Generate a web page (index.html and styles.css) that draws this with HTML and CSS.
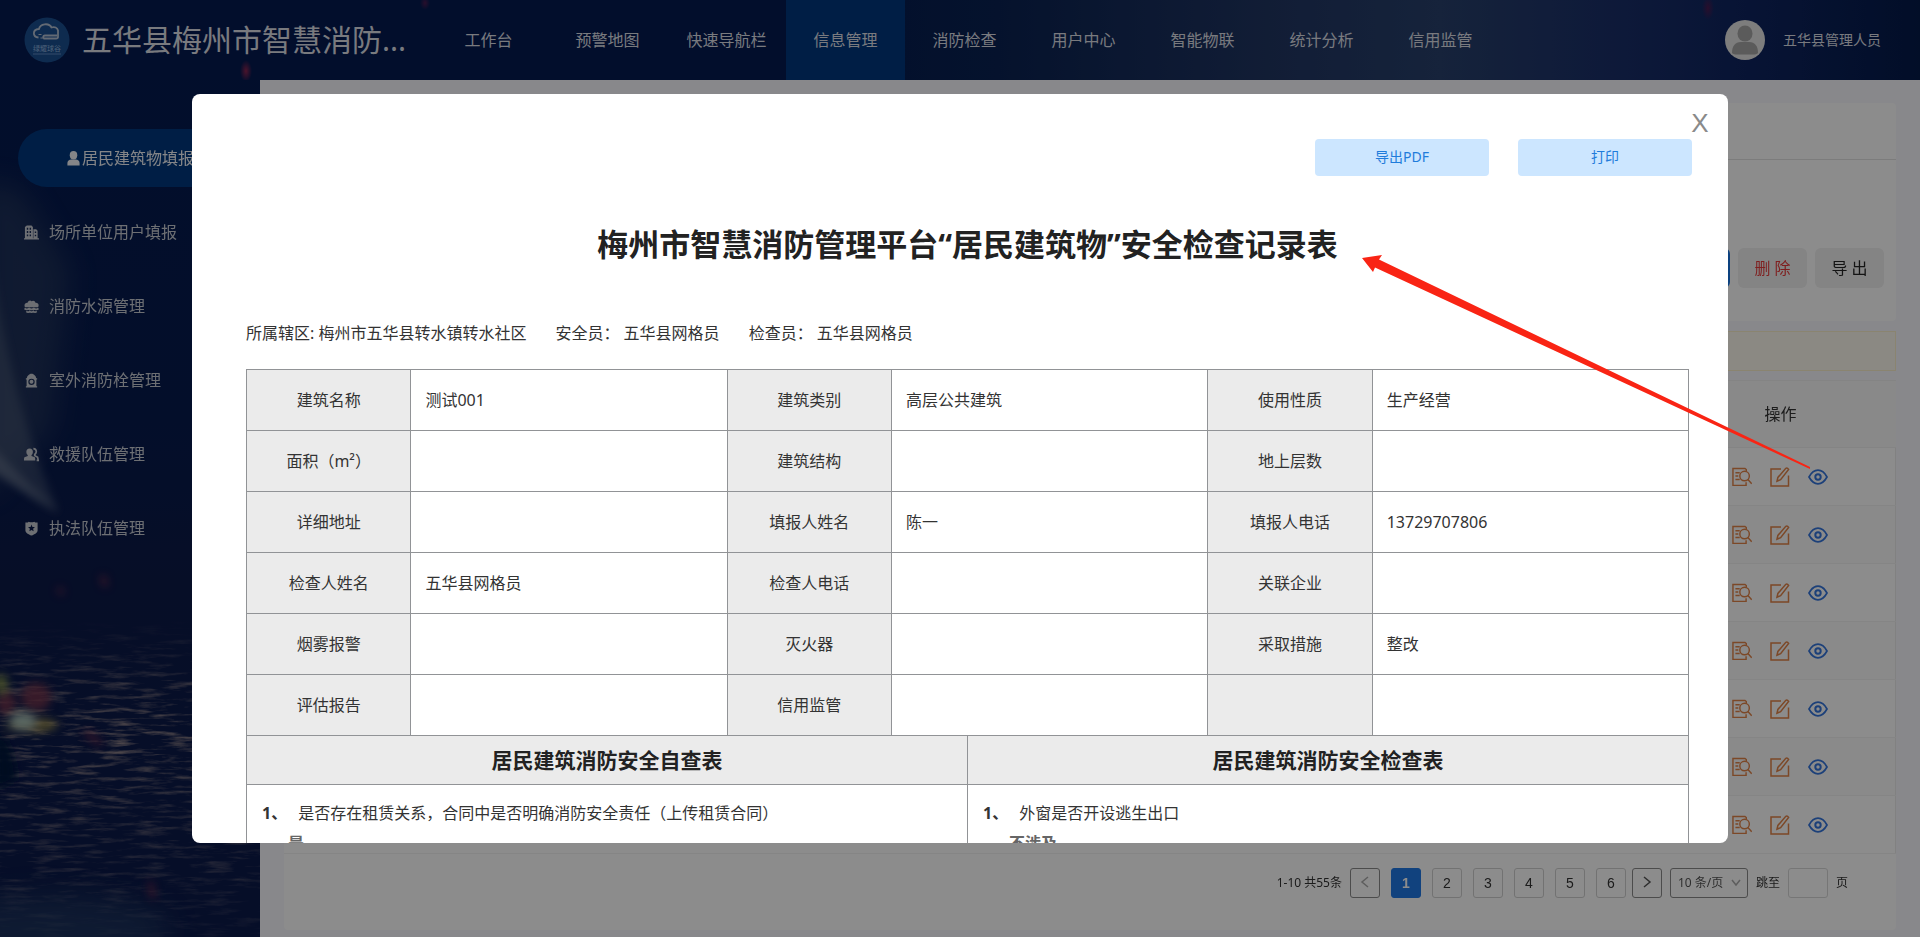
FILE: index.html
```html
<!DOCTYPE html>
<html lang="zh-CN">
<head>
<meta charset="utf-8">
<title>五华县梅州市智慧消防管理平台</title>
<link rel="stylesheet" href="styles.css">
</head>
<body>
<svg class="sprite" aria-hidden="true">
  <symbol id="i-report" viewBox="0 0 21 20"><g fill="none" stroke="currentColor" stroke-width="1.5"><path d="M15 4V2.200L13.600 1H1v17.800h13.800V15.500"/><circle cx="13.200" cy="9" r="5"/><path d="M16.700 12.700l4 4.300M3.600 5.500h4.500M3.600 9h3M3.600 12.600h4.500"/></g></symbol>
  <symbol id="i-edit" viewBox="0 0 20 20"><g fill="none" stroke="currentColor" stroke-width="1.5"><path d="M11 2H1v17h17.500V8.500"/><path d="M7 14.200l.9-3.800L15.800 1.300q1.600-.8 2.800 1.200l-8 10.100z"/></g></symbol>
  <symbol id="i-eye" viewBox="0 0 20 16"><g fill="none" stroke="currentColor"><path stroke-width="1.7" d="M1 8C3.200 4 6 1.200 10 1.200S16.800 4 19 8c-2.200 4-5 6.800-9 6.800S3.200 12 1 8z"/><circle cx="10" cy="8" r="2.700" stroke-width="2"/></g></symbol>
  <symbol id="i-user" viewBox="0 0 14 16"><g fill="currentColor"><ellipse cx="7" cy="4.500" rx="4" ry="4.500"/><path d="M.5 15.500v-2.800c0-2.400 2-3.400 4-3.700h5c2 .3 4 1.300 4 3.700v2.800z"/></g></symbol>
  <symbol id="i-building" viewBox="0 0 16 16"><path fill="currentColor" fill-rule="evenodd" d="M1 14V2l2-1.500h5L9.500 2v12H10V4.500h3L14.500 6v8H16v1.500H0V14zM3 3v2h1.500V3zm3 0v2h1.500V3zM3 6.500v2h1.500v-2zm3 0v2h1.500v-2zM3 10v2h1.500v-2zm3 0v2h1.500v-2zm5.500-3v1.500H13V7zm0 3.500V12H13v-1.500z"/></symbol>
  <symbol id="i-water" viewBox="0 0 16 16"><path fill="currentColor" d="M1 8.800C-.5 5.500 2 3.500 3.800 4 4.800 1.500 6.800 1 8 2.500c1.800-1.300 4-.3 4.200 1.500 2.800-.3 4.300 2 2.800 4.800z"/><path fill="none" stroke="currentColor" stroke-width="1.800" d="M.5 10.200c2 1.400 3 1.400 5 0 2 1.400 3 1.400 5 0 2 1.400 3 1.400 5 0M2.500 13.200c1.500 1.400 2.200 1.400 3.700 0 1.500 1.400 2.200 1.400 3.700 0 1.500 1.400 2.200 1.400 3.700 0"/></symbol>
  <symbol id="i-hydrant" viewBox="0 0 16 16"><path fill="currentColor" fill-rule="evenodd" d="M3 5.500C3.300 3 5 1.800 7 .8h2c2 1 3.700 2.200 4 4.700H14V7h-.8v7H14v1.500H2V14h.8V7H2V5.500zM8 6a3.400 3.400 0 100 6.800A3.400 3.400 0 008 6zm0 1.300a2.100 2.100 0 110 4.200 2.100 2.100 0 010-4.200z"/><circle cx="8" cy="9.400" r="1" fill="currentColor"/></symbol>
  <symbol id="i-team" viewBox="0 0 16 16"><path fill="currentColor" d="M6 1.500c2.300 0 3.500 1.500 3.500 3.500 0 1.500-.6 2.800-1.500 3.500v1l3.500 1.500c.5.500.5 2.500.5 3.500H0c0-1 0-3 .5-3.500L4 9.500v-1C3 7.800 2.500 6.500 2.500 5c0-2 1.200-3.500 3.500-3.500z"/><path fill="none" stroke="currentColor" stroke-width="1.800" d="M10 1.800c3.500.2 4 4 1.500 6.200v1.200l3 1.800.7 3.300H13.500"/></symbol>
  <symbol id="i-shield" viewBox="0 0 16 16"><path fill="currentColor" fill-rule="evenodd" d="M1.500 1.500c2 .5 2.800 0 3.500-.8C7 1.500 9 1.500 11 .7c.7.800 1.500 1.300 3.500.8v8.500c0 2.500-3 4-6.500 5.500-3.500-1.500-6.500-3-6.500-5.500zM8 3.800L7 6.300l-2.700.2 2 1.700-.6 2.700L8 9.500l2.300 1.400-.6-2.700 2-1.700L9 6.300z"/></symbol>
</svg>

<div class="page">
  <svg class="scene" viewBox="0 0 260 937" preserveAspectRatio="none" aria-hidden="true">
    <defs>
      <filter id="soft" x="-50%" y="-50%" width="200%" height="200%"><feGaussianBlur stdDeviation="14"/></filter>
      <filter id="thin" x="-50%" y="-50%" width="200%" height="200%"><feGaussianBlur stdDeviation="4"/></filter>
      <filter id="ripple" x="0" y="0" width="100%" height="100%">
        <feTurbulence type="fractalNoise" baseFrequency=".03 .22" numOctaves="4" seed="8"/>
        <feColorMatrix values="0 0 0 0 .5  0 0 0 0 .38  0 0 0 0 .34  2.600 0 0 0 -1.250"/>
      </filter>
      <linearGradient id="fade" x1="0" y1="0" x2="0" y2="1"><stop offset="0" stop-color="#000"/><stop offset=".35" stop-color="#fff"/><stop offset=".6" stop-color="#999"/><stop offset="1" stop-color="#222"/></linearGradient>
      <mask id="lower"><rect y="620" width="260" height="317" fill="url(#fade)"/></mask>
    </defs>
    <path d="M-20 180l40 10 50 80-20 160L-20 500z" fill="#3a4c66" opacity=".45" filter="url(#soft)"/>
    <path d="M-10 250Q10 400 58 512 20 490-10 465z" fill="#5a6880" opacity=".45" filter="url(#thin)"/>
    <path d="M-10 445Q25 480 60 514 20 490-10 470z" fill="#7c879b" opacity=".45" filter="url(#thin)"/>
    <rect y="620" width="260" height="317" filter="url(#ripple)" mask="url(#lower)" opacity=".8"/>
    <ellipse cx="50" cy="930" rx="120" ry="34" fill="#2c466c" opacity=".5" filter="url(#soft)"/>
    <g filter="url(#thin)">
      <ellipse cx="36" cy="697" rx="15" ry="14" fill="#8a3c50" opacity=".7"/>
      <ellipse cx="6" cy="703" rx="10" ry="12" fill="#8a3c50" opacity=".7"/>
      <ellipse cx="1" cy="684" rx="7" ry="10" fill="#8b994b" opacity=".8"/>
      <ellipse cx="32" cy="725" rx="26" ry="7" fill="#a0924e" opacity=".8"/>
      <ellipse cx="23" cy="721" rx="13" ry="8" fill="#a6bdb2"/>
      <path d="M-5 730q20 10 22 50l-22 10z" fill="#04123a"/>
      <path d="M85 732l16 12M150 882l3 16M102 576l4 10M59 588l3 6" stroke="#94304c" stroke-width="5" opacity=".7"/>
    </g>
  </svg>

  <header class="topbar">
    <div class="brand">
      <svg class="logo" viewBox="0 0 46 46" aria-hidden="true">
        <circle cx="23" cy="23" r="22.500" fill="#1b4f90"/>
        <path d="M14.500 20.500c-6-.5-6.500-8 .5-8.500C16 6.500 25 5.500 27.500 10.500c3-1 6 0 6.500 3v6.500q0 1.500-2 1.500H20q-2-2.500 1-3h12" fill="none" stroke="#b4c1d3" stroke-width="1.800"/>
        <path d="M14.500 17.500h3m-1 3.500h3" stroke="#b4c1d3" stroke-width="1.200"/>
        <text x="23" y="34" text-anchor="middle">绿耀球谷</text>
        <path d="M9 37h28" stroke="#6e9bd2" stroke-width=".8"/>
      </svg>
      <div class="brand-name">五华县梅州市智慧消防...</div>
    </div>
    <nav class="topnav">
      <a href="#">工作台</a><a href="#">预警地图</a><a href="#">快速导航栏</a><a href="#" class="on">信息管理</a><a href="#">消防检查</a><a href="#">用户中心</a><a href="#">智能物联</a><a href="#">统计分析</a><a href="#">信用监管</a>
    </nav>
    <div class="account">
      <svg class="avatar" viewBox="0 0 40 40" aria-hidden="true"><circle cx="20" cy="20" r="20" fill="#e3e3e3"/><ellipse cx="20" cy="13.500" rx="7.500" ry="8" fill="#a6a6a6"/><path d="M7 33c0-7 3-11 9-11h8c6 0 9 4 9 11-1 1-3 1.500-5 1.500H12c-2 0-4-.5-5-1.500z" fill="#a6a6a6"/></svg>
      <span>五华县管理人员</span>
    </div>
  </header>

  <div class="main">
    <nav class="side">
      <a href="#" class="on"><svg><use href="#i-user"/></svg>居民建筑物填报</a>
      <a href="#"><svg><use href="#i-building"/></svg>场所单位用户填报</a>
      <a href="#"><svg><use href="#i-water"/></svg>消防水源管理</a>
      <a href="#"><svg><use href="#i-hydrant"/></svg>室外消防栓管理</a>
      <a href="#"><svg><use href="#i-team"/></svg>救援队伍管理</a>
      <a href="#"><svg><use href="#i-shield"/></svg>执法队伍管理</a>
    </nav>

    <main class="content">
      <section class="card filter">
        <div class="card-head"></div>
        <div class="tools">
          <button class="btn primary" type="button" aria-label="新增"></button>
          <button class="btn danger" type="button">删 除</button>
          <button class="btn" type="button">导 出</button>
        </div>
      </section>
      <div class="notice"></div>
      <section class="card list">
        <table class="grid">
          <thead><tr><th></th><th class="ops">操作</th></tr></thead>
          <tbody>
            <tr><td></td><td><div class="acts"><svg class="o"><use href="#i-report"/></svg><svg class="o"><use href="#i-edit"/></svg><svg class="b"><use href="#i-eye"/></svg></div></td></tr>
            <tr><td></td><td><div class="acts"><svg class="o"><use href="#i-report"/></svg><svg class="o"><use href="#i-edit"/></svg><svg class="b"><use href="#i-eye"/></svg></div></td></tr>
            <tr><td></td><td><div class="acts"><svg class="o"><use href="#i-report"/></svg><svg class="o"><use href="#i-edit"/></svg><svg class="b"><use href="#i-eye"/></svg></div></td></tr>
            <tr><td></td><td><div class="acts"><svg class="o"><use href="#i-report"/></svg><svg class="o"><use href="#i-edit"/></svg><svg class="b"><use href="#i-eye"/></svg></div></td></tr>
            <tr><td></td><td><div class="acts"><svg class="o"><use href="#i-report"/></svg><svg class="o"><use href="#i-edit"/></svg><svg class="b"><use href="#i-eye"/></svg></div></td></tr>
            <tr><td></td><td><div class="acts"><svg class="o"><use href="#i-report"/></svg><svg class="o"><use href="#i-edit"/></svg><svg class="b"><use href="#i-eye"/></svg></div></td></tr>
            <tr><td></td><td><div class="acts"><svg class="o"><use href="#i-report"/></svg><svg class="o"><use href="#i-edit"/></svg><svg class="b"><use href="#i-eye"/></svg></div></td></tr>
          </tbody>
        </table>
        <div class="pager">
          <span>1-10 共55条</span>
          <div class="pages">
            <button type="button" class="arrow off" aria-label="上一页"><svg viewBox="0 0 10 12"><path d="M8 1L2 6l6 5"/></svg></button>
            <button type="button" class="on">1</button>
            <button type="button">2</button>
            <button type="button">3</button>
            <button type="button">4</button>
            <button type="button">5</button>
            <button type="button">6</button>
          </div>
          <div class="turn">
            <button type="button" class="arrow" aria-label="下一页"><svg viewBox="0 0 10 12"><path d="M2 1l6 5-6 5"/></svg></button>
            <div class="size">
              <select aria-label="每页条数"><option>10 条/页</option></select>
              <svg viewBox="0 0 10 8"><path d="M1 1l4 5 4-5"/></svg>
            </div>
            <label for="jump">跳至</label>
            <input id="jump" type="text">
            <span>页</span>
          </div>
        </div>
      </section>
    </main>
  </div>
</div>

<div class="mask">
  <div class="modal" role="dialog" aria-labelledby="sheet-title">
    <button class="close" type="button" aria-label="关闭">X</button>
    <div class="modal-actions">
      <button type="button">导出PDF</button>
      <button type="button">打印</button>
    </div>
    <div class="sheet">
      <h1 id="sheet-title">梅州市智慧消防管理平台“居民建筑物”安全检查记录表</h1>
      <div class="meta">
        <span>所属辖区: 梅州市五华县转水镇转水社区</span>
        <span>安全员： 五华县网格员</span>
        <span>检查员： 五华县网格员</span>
      </div>
      <table class="form">
        <tr><th>建筑名称</th><td>测试001</td><th>建筑类别</th><td>高层公共建筑</td><th>使用性质</th><td>生产经营</td></tr>
        <tr><th>面积（m²）</th><td></td><th>建筑结构</th><td></td><th>地上层数</th><td></td></tr>
        <tr><th>详细地址</th><td></td><th>填报人姓名</th><td>陈一</td><th>填报人电话</th><td>13729707806</td></tr>
        <tr><th>检查人姓名</th><td>五华县网格员</td><th>检查人电话</th><td></td><th>关联企业</th><td></td></tr>
        <tr><th>烟雾报警</th><td></td><th>灭火器</th><td></td><th>采取措施</th><td>整改</td></tr>
        <tr><th>评估报告</th><td></td><th>信用监管</th><td></td><th></th><td></td></tr>
      </table>
      <table class="checks">
        <tr><th>居民建筑消防安全自查表</th><th>居民建筑消防安全检查表</th></tr>
        <tr>
          <td><div class="q"><b>1、</b><span>是否存在租赁关系，合同中是否明确消防安全责任（上传租赁合同）</span></div><div class="a">是</div></td>
          <td><div class="q"><b>1、</b><span>外窗是否开设逃生出口</span></div><div class="a">不涉及</div></td>
        </tr>
      </table>
    </div>
  </div>
</div>

<svg class="pointer" viewBox="0 0 448 214" aria-hidden="true"><path d="M0 3L20 0l-3 4.500L448 212v2L13 12.500 11 17z" fill="#f92414"/></svg>
</body>
</html>
```
FILE: styles.css
```css
* { box-sizing: border-box; }
body {
  margin: 0;
  font: 16px/24px "Noto Sans", "Noto Sans CJK SC", sans-serif;
  color: #333;
  overflow: hidden;
}
button, input, select { font: inherit; color: inherit; margin: 0; }
a { color: inherit; text-decoration: none; }
.sprite { position: absolute; width: 0; height: 0; }

.page {
  position: relative;
  display: flex;
  flex-direction: column;
  min-height: 100vh;
  background: linear-gradient(#041a50, #071b4e 45%, #0c1a48 62%, #0b1a4a);
}
.scene { position: absolute; left: 0; top: 0; width: 260px; height: 100%; }

.topbar {
  position: relative;
  display: flex;
  align-items: center;
  height: 80px;
  padding: 0 39px 0 24px;
  color: #dcdfe6;
  background:
    radial-gradient(closest-side, #8a2450, transparent) 240px 60px / 12px 22px no-repeat,
    radial-gradient(closest-side, #4a1a50, transparent) 420px -4px / 10px 14px no-repeat,
    radial-gradient(closest-side, #4a1a50, transparent) 1702px -4px / 12px 24px no-repeat,
    linear-gradient(90deg, #041a50 0%, #041a50 42%, #0a2252 52%, #203562 66%, #28406c 75%, #1a2f69 84%, #0e2460 91%, #041a4a 100%);
}
.brand { display: flex; align-items: center; gap: 12px; width: 405px; flex: none; }
.logo { width: 46px; height: 46px; flex: none; }
.logo text { font-size: 7px; fill: #8fb3de; }
.brand-name { font-size: 30px; line-height: 40px; white-space: nowrap; }
.topnav { display: flex; flex: 1; align-self: stretch; }
.topnav a { width: 119px; line-height: 80px; text-align: center; white-space: nowrap; }
.topnav .on { background: #00387e; }
.account { display: flex; align-items: center; gap: 18px; font-size: 14px; }
.avatar { width: 40px; height: 40px; }

.main { position: relative; display: flex; flex: 1; }
.side {
  display: flex;
  flex-direction: column;
  gap: 16px;
  flex: none;
  width: 260px;
  padding-top: 49px;
  color: #c6cad2;
}
.side a { display: flex; align-items: center; gap: 10px; height: 58px; padding-left: 24px; white-space: nowrap; }
.side svg { width: 15px; height: 15px; }
.side .on { gap: 1px; margin-left: 18px; padding-left: 48px; border-radius: 29px 0 0 29px; background: #00387e; color: #f1f3f7; }

.content { flex: 1; display: flex; flex-direction: column; padding: 23px 24px 7px; background: #f8f8fd; }
.card { background: #fff; border-radius: 4px; }
.filter { height: 218px; }
.card-head { height: 57px; border-bottom: 1px solid #e2e2e2; }
.tools { display: flex; justify-content: flex-end; gap: 8px; padding: 88px 12px 0; }
.btn { width: 69px; height: 40px; padding: 0; border: 0; border-radius: 6px; background: #f0f0f0; color: #262626; }
.primary { background: #1677e8; }
.danger { color: #e83a3a; }
.notice { height: 40px; margin: 10px 0 9px; border: 1px solid #fbf0cc; background: #fdf9ee; }

.grid { width: 100%; border-collapse: collapse; }
.grid th { height: 67px; background: #fafafa; font-weight: 400; border: 1px solid #f0f0f0; border-width: 1px 0; }
.grid .ops { width: 230px; }
.grid td { height: 58px; padding: 0; border-bottom: 1px solid #f2f2f2; }
.grid td:last-child { border-right: 1px solid #ececec; }
.grid tr:nth-child(even) td { background: #fbfbfb; }
.acts { display: flex; justify-content: center; gap: 18px; align-items: center; }
.acts svg { width: 20px; height: 20px; }
.acts .o { color: #e28347; }
.acts .b { color: #3475dd; }

.pager { display: flex; justify-content: flex-end; align-items: center; padding: 14px 48px 32px; font-size: 12px; }
.pages { display: flex; gap: 11px; padding: 0 6px 0 8px; }
.turn { display: flex; align-items: center; gap: 8px; }
.pager button { width: 30px; height: 30px; padding: 0; font: 14px/28px "Liberation Sans", sans-serif; border: 1px solid #d0d0d0; border-radius: 3px; background: transparent; }
.pager .on { background: #1f78e6; border-color: #1f78e6; color: #fff; font-weight: 700; }
.pager .arrow { border-color: #8a8a8a; }
.pager .arrow svg { width: 10px; height: 12px; }
.pager path { fill: none; stroke: #555; stroke-width: 1.5; }
.pager .off path { stroke: #aaa; }
.size { position: relative; }
.size select { display: block; width: 78px; height: 30px; padding: 0 7px; appearance: none; border: 1px solid #8a8a8a; border-radius: 3px; background: transparent; color: #555; }
.size svg { position: absolute; right: 7px; top: 11px; width: 10px; height: 8px; pointer-events: none; }
.size path { stroke: #aaa; }
.pager input { width: 40px; height: 30px; border: 1px solid #d8d8d8; border-radius: 3px; background: transparent; }

.mask {
  position: fixed;
  inset: 0;
  display: flex;
  align-items: center;
  justify-content: center;
  background: rgba(0, 0, 0, .45);
}
.modal {
  position: relative;
  width: 80%;
  height: 80%;
  padding-top: 45px;
  border-radius: 8px;
  background: #fff;
  overflow-y: auto;
  scrollbar-width: none;
}
.close {
  position: absolute;
  top: 15px;
  right: 14px;
  width: 28px;
  height: 28px;
  padding: 0;
  border: 0;
  background: none;
  font: 26px/28px "Liberation Sans", sans-serif;
  color: #8a8a8a;
}
.modal-actions { display: flex; justify-content: flex-end; gap: 29px; padding-right: 36px; }
.modal-actions button { width: 174px; height: 37px; padding: 0; border: 0; border-radius: 4px; background: #cce6ff; color: #1f7cdb; font-size: 14px; }
.sheet { padding: 0 39px 0 54px; }
.sheet h1 { margin: 47px 0 56px; font-size: 31px; line-height: 42px; font-weight: 700; text-align: center; color: #222; }
.meta { display: flex; gap: 29px; margin-bottom: 24px; white-space: nowrap; }

.form, .checks { width: 100%; table-layout: fixed; border-collapse: collapse; }
.form th, .form td, .checks th, .checks td { border: 1px solid #919396; }
.form th, .form td { height: 61px; padding: 0 14px; font-weight: 400; text-align: left; }
.form th { width: 11.4%; padding: 0; text-align: center; background: #ebebeb; }
.checks tr:first-child th { height: 49px; border-top: 0; padding: 0; background: #ebebeb; font-size: 21px; color: #222; }
.checks td { padding: 16px 15px; vertical-align: top; }
.q { display: flex; gap: 11px; }
.a { margin: 6px 0 0 26px; font-weight: 600; color: #666; }

.pointer { position: absolute; top: 255px; left: 1362px; width: 448px; height: 214px; pointer-events: none; }
```
